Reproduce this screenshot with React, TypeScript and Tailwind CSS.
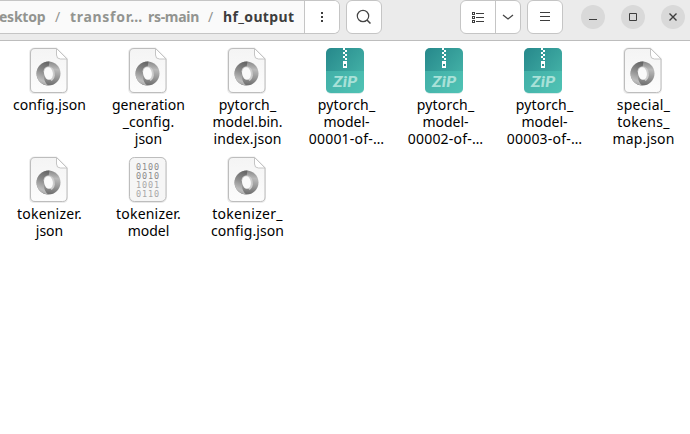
import React from "react";

type Kind = "json" | "zip" | "binary";
type Line = [text: string, spacing: string];
type FileEntry = { kind: Kind; lines: Line[] };

const files: FileEntry[] = [
  { kind: "json", lines: [["config.json", "tracking-[0.1px]"]] },
  { kind: "json", lines: [["generation", "tracking-[0.1px]"], ["_config.", "tracking-[0.1px]"], ["json", "tracking-normal"]] },
  { kind: "json", lines: [["pytorch_", "tracking-[0.2px]"], ["model.bin.", "tracking-normal"], ["index.json", "tracking-[0.1px]"]] },
  { kind: "zip", lines: [["pytorch_", "tracking-[0.2px]"], ["model-", "tracking-normal"], ["00001-of-…", "tracking-[0.2px]"]] },
  { kind: "zip", lines: [["pytorch_", "tracking-[0.2px]"], ["model-", "tracking-normal"], ["00002-of-…", "tracking-[0.2px]"]] },
  { kind: "zip", lines: [["pytorch_", "tracking-[0.2px]"], ["model-", "tracking-normal"], ["00003-of-…", "tracking-[0.2px]"]] },
  { kind: "json", lines: [["special_", "tracking-[0.3px]"], ["tokens_", "tracking-[0.3px]"], ["map.json", "tracking-[0.15px]"]] },
  { kind: "json", lines: [["tokenizer.", "tracking-[0.2px]"], ["json", "tracking-normal"]] },
  { kind: "binary", lines: [["tokenizer.", "tracking-[0.2px]"], ["model", "tracking-normal"]] },
  { kind: "json", lines: [["tokenizer_", "tracking-[0.3px]"], ["config.json", "tracking-[0.1px]"]] },
];

function JsonIcon() {
  return (
    <svg width="40" height="48" viewBox="0 0 40 48">
      <defs>
        <linearGradient id="paper" x1="0" y1="0" x2="0" y2="1">
          <stop offset="0" stopColor="#f4f4f4" />
          <stop offset="1" stopColor="#fcfcfc" />
        </linearGradient>
        <linearGradient id="leftSwirl" x1="0.6" y1="0" x2="0.4" y2="1">
          <stop offset="0" stopColor="#666" />
          <stop offset="0.45" stopColor="#909090" />
          <stop offset="0.8" stopColor="#bebebe" />
          <stop offset="1" stopColor="#a0a0a0" />
        </linearGradient>
        <linearGradient id="rightSwirl" x1="0.5" y1="0" x2="0.4" y2="1">
          <stop offset="0" stopColor="#8a8a8a" />
          <stop offset="0.3" stopColor="#bababa" />
          <stop offset="0.65" stopColor="#969696" />
          <stop offset="1" stopColor="#6a6a6a" />
        </linearGradient>
      </defs>
      <path d="M6 1.500H27.500L38 12V41.500Q38 46 33.500 46H5.500Q1 46 1 41.500V6Q1 1.500 6 1.500Z" fill="none" stroke="#ececec" strokeWidth="2" />
      <path d="M6 1.500H27.500L38 12V41Q38 45.500 33.500 45.500H6Q1.500 45.500 1.500 41V6Q1.500 1.500 6 1.500Z" fill="url(#paper)" stroke="#bdbdbd" />
      <path d="M27.500 1.500V8Q27.500 12 31.500 12H38Z" fill="#fff" stroke="#c4c4c4" />
      <g transform="translate(-.5 -2.500)">
        <circle cx="20" cy="29" r="12" fill="url(#rightSwirl)" />
        <path d="M21 17C13.500 16.700 8 22.500 8 29S13.500 41 20 41C17 39 15.200 35 15.500 30C15.800 25.500 17.500 23 20 22.500Z" fill="url(#leftSwirl)" />
        <path d="M15 27.500C15 23.500 17.700 21.800 20.500 22C24.500 22.500 26.500 26 26.300 31C26 33.500 25 35.500 23 36.500Z" fill="#cdcdcd" />
        <ellipse cx="20" cy="29" rx="4.400" ry="6.400" fill="#fafafa" transform="rotate(-8 20 29)" />
      </g>
    </svg>
  );
}

function ZipIcon() {
  return (
    <svg width="40" height="48" viewBox="1 0 40 48">
      <defs>
        <linearGradient id="zip" x1="0" y1="0" x2="1" y2="1">
          <stop offset="0" stopColor="#26888b" />
          <stop offset="1" stopColor="#4bbcae" />
        </linearGradient>
      </defs>
      <rect x="1" y="1.500" width="38" height="45.500" rx="5" fill="#dcebea" />
      <rect x="1" y="1" width="38" height="45" rx="5" fill="url(#zip)" />
      <path d="M1 24H39V41Q39 46 34 46H6Q1 46 1 41Z" fill="#55cabd" fillOpacity=".48" />
      <path d="M18 1h2v2h-2zm2 2h2v2h-2zm-2 2h2v2h-2zm2 2h2v2h-2zm-2 2h2v2h-2zm2 2h2v2h-2zM18 14h4v7h-4z" fill="#fff" />
      <path d="M19 17h2v2h-2z" fill="#2e928f" />
      <text x="8" y="40" fontFamily="Lato, sans-serif" fontWeight="900" fontStyle="italic" fontSize="15.500" textLength="24" lengthAdjust="spacingAndGlyphs" fill="#a9e1d8">ZiP</text>
    </svg>
  );
}

function BinaryIcon() {
  return (
    <svg width="40" height="48" viewBox="0 0 40 48">
      <rect x="1.500" y="2" width="36.500" height="44" rx="5" fill="#f6f6f6" stroke="#e9e9e9" strokeWidth="2" />
      <rect x="1.500" y="1.500" width="36.500" height="44" rx="5" fill="#f6f6f6" stroke="#bdbdbd" />
      <g fontFamily="'DejaVu Sans Mono', monospace" fontSize="8.500">
        <text x="8" y="14" fill="#8c8c8c" textLength="23">0100</text>
        <text x="8" y="23" fill="#8c8c8c" textLength="23">0010</text>
        <text x="8" y="32" fill="#a8a8a8" textLength="23">1001</text>
        <text x="8" y="41" fill="#a8a8a8" textLength="23">0110</text>
      </g>
    </svg>
  );
}

function FileTile({ file }: { file: FileEntry }) {
  return (
    <div className="flex h-[109px] flex-col items-center">
      <div className="mb-px h-[48px]">
        {file.kind === "json" ? <JsonIcon /> : file.kind === "zip" ? <ZipIcon /> : <BinaryIcon />}
      </div>
      <p className="pl-[2px] text-center text-[14px] leading-[17px] whitespace-nowrap">
        {file.lines.map(([text, spacing], index) => (
          <React.Fragment key={text}>
            {index > 0 && <br />}
            <span className={spacing}>{text}</span>
          </React.Fragment>
        ))}
      </p>
    </div>
  );
}

const button = "flex h-[34px] items-center justify-center rounded-[6px] border border-[#c5c5c5] bg-white";

function WindowButton({ children }: { children: React.ReactNode }) {
  return <div className="flex size-6 items-center justify-center rounded-full bg-[#d9d9d9]">{children}</div>;
}

export default function App() {
  return (
    <div className="h-[434px] w-[690px] overflow-hidden bg-white font-['Noto_Sans','Open_Sans',sans-serif] text-black">
      <header className="flex h-[41px] items-start border-b border-[#bdbdbd] bg-[#ebebeb]">
        <div className="flex h-[34px] w-[340px] shrink-0 rounded-r-[6px] border border-l-0 border-[#c5c5c5] bg-[#fafafa] text-[14px] leading-[31px] font-bold whitespace-pre text-[#929490]">
          <span className="-ml-px w-[56px] tracking-[-0.25px]">esktop</span>
          <span className="w-[15px] font-normal">/</span>
          <span className="w-[78px] tracking-[0.7px]">transfor…</span>
          <span className="w-[60px] tracking-[-0.3px]">rs-main</span>
          <span className="w-[15px] font-normal">/</span>
          <span className="w-[81px] tracking-[0.35px] text-[#3d3d3d]">hf_output</span>
          <div className="flex flex-1 items-center justify-center rounded-r-[5px] border-l border-[#c5c5c5] bg-white">
            <svg width="4" height="12"><path d="M1 1h2v2H1zm0 4h2v2H1zm0 4h2v2H1z" fill="#3d3d3d" /></svg>
          </div>
        </div>
        <div className={`${button} ml-[6px] w-9`}>
          <svg width="16" height="16" fill="none" stroke="#444" strokeWidth="1.2"><circle cx="7" cy="7" r="5.700" /><path d="m11 11 3.500 3.500" strokeWidth="1.500" /></svg>
        </div>
        <div className={`${button} ml-[78px] w-[61px]`}>
          <div className="flex h-full w-[35px] items-center justify-center border-r border-[#c5c5c5]">
            <svg width="14" height="13" shapeRendering="crispEdges"><g fill="none" stroke="#3d3d3d"><path d="M1.500 1.500h2v2h-2zm0 4h2v2h-2zm0 4h2v2h-2zM5 2.500h8M5 6.500h8M5 10.500h8" /></g></svg>
          </div>
          <div className="flex flex-1 items-center justify-center">
            <svg width="12" height="8" fill="none" stroke="#444" strokeWidth="1.300"><path d="m1 2 5 4 5-4" /></svg>
          </div>
        </div>
        <div className={`${button} ml-[6px] w-9`}>
          <svg width="10" height="12" shapeRendering="crispEdges"><path d="M0 1.500h10M0 5.500h10M0 9.500h10" stroke="#3d3d3d" /></svg>
        </div>
        <div className="ml-[18px] flex gap-4 pt-[5px]">
          <WindowButton><svg width="8" height="10"><path d="M0 7.500h8" stroke="#3d3d3d" /></svg></WindowButton>
          <WindowButton><svg width="8" height="8"><path d="M.5.5h7v7h-7z" fill="none" stroke="#3d3d3d" /></svg></WindowButton>
          <WindowButton><svg width="8" height="8"><path d="m.5.5 7 7m0-7-7 7" stroke="#3d3d3d" strokeWidth="1.400" /></svg></WindowButton>
        </div>
      </header>
      <main className="ml-[-1px] grid w-[693px] grid-cols-7 pt-[6px]">
        {files.map((file, index) => <FileTile key={index} file={file} />)}
      </main>
    </div>
  );
}
